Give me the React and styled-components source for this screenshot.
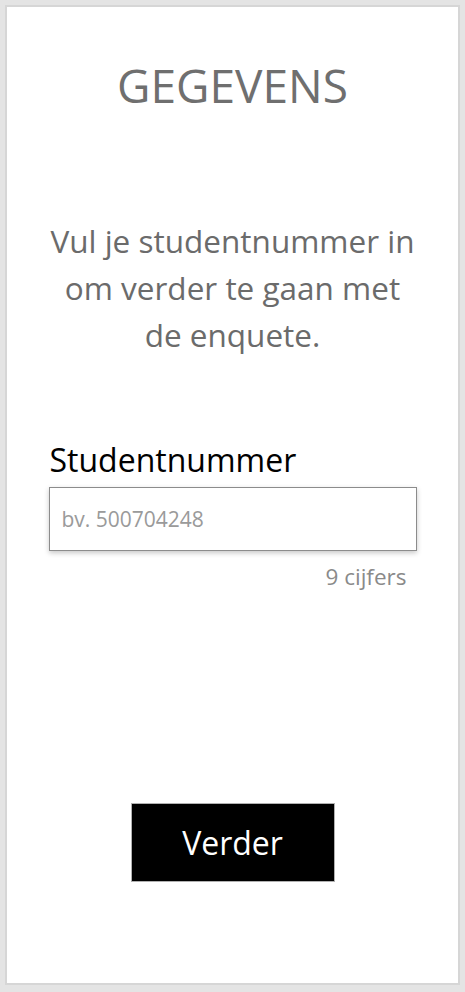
import React from "react";
import styled, { createGlobalStyle } from "styled-components";

const Global = createGlobalStyle`
  html, body { margin: 0; padding: 0; background: #e4e4e4; }
  body { font-family: "Open Sans", "Noto Sans", sans-serif; }
  * { box-sizing: border-box; }
`;

const Page = styled.div`
  padding: 5px 5px 7px 5px;
`;

const Panel = styled.main`
  width: 455px;
  height: 980px;
  background: #ffffff;
  border: 2px solid #d6d6d6;
  display: flex;
  flex-direction: column;
  align-items: center;
  padding-top: 50px;
`;

const Title = styled.h1`
  margin: 0;
  font-weight: 400;
  font-size: 46px;
  line-height: 56px;
  color: #6f6f6f;
  text-align: center;
`;

const Intro = styled.p`
  margin: 104px 0 0 0;
  font-size: 31.5px;
  line-height: 47px;
  color: #6b6b6b;
  text-align: center;
`;

const Form = styled.div`
  width: 368px;
  margin-top: 82px;
  display: flex;
  flex-direction: column;
`;

const Label = styled.label`
  font-size: 32px;
  line-height: 40px;
  color: #000;
  padding-left: 1px;
`;

const Input = styled.input`
  margin-top: 7px;
  height: 64px;
  width: 100%;
  border: 1px solid #8c8c8c;
  box-shadow: 0 2px 5px rgba(0, 0, 0, 0.22);
  padding: 0 12px;
  font-family: "Open Sans", "Noto Sans", sans-serif;
  font-size: 21px;
  color: #333;
  outline: none;
  background: #fff;
  &::placeholder { color: #9a9a9a; }
`;

const Hint = styled.div`
  margin-top: 12px;
  font-size: 22.5px;
  line-height: 28px;
  color: #8a8a8a;
  text-align: right;
  padding-right: 10px;
`;

const Button = styled.button`
  margin-top: 212px;
  width: 204px;
  height: 79px;
  background: #000;
  border: 1px solid #b0b0b0;
  color: #fff;
  font-family: "Open Sans", "Noto Sans", sans-serif;
  font-size: 32px;
  cursor: pointer;
`;

export default function App() {
  return (
    <>
      <Global />
      <Page>
        <Panel>
          <Title>GEGEVENS</Title>
          <Intro>
            Vul je studentnummer in
            <br />
            om verder te gaan met
            <br />
            de enquete.
          </Intro>
          <Form>
            <Label htmlFor="sn">Studentnummer</Label>
            <Input id="sn" placeholder="bv. 500704248" />
            <Hint>9 cijfers</Hint>
          </Form>
          <Button>Verder</Button>
        </Panel>
      </Page>
    </>
  );
}
